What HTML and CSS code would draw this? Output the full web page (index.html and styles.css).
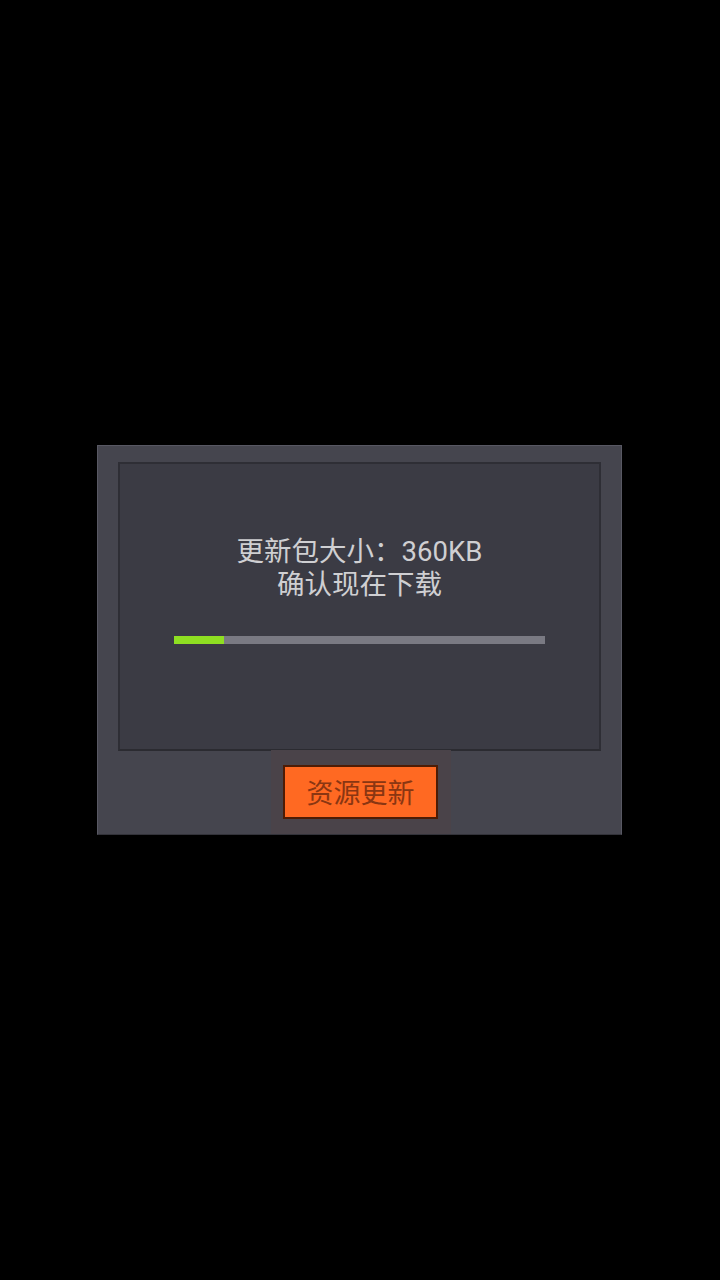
FILE: index.html
```html
<!DOCTYPE html>
<html lang="zh">
<head>
<meta charset="utf-8">
<link rel="stylesheet" href="styles.css">
</head>
<body>
<div class="screen">
  <div class="dialog">
    <div class="inner">
      <div class="message">
        <div class="line">更新包大小：360KB</div>
        <div class="line">确认现在下载</div>
      </div>
      <div class="progress"><div class="fill" style="width:50px"></div></div>
    </div>
    <div class="actions">
      <div class="halo">
        <div class="btn">资源更新</div>
      </div>
    </div>
  </div>
</div>
</body>
</html>
```
FILE: styles.css
```css
html, body {
  margin: 0;
  padding: 0;
  background: #000;
}
.screen {
  width: 720px;
  height: 1280px;
  display: flex;
  align-items: center;
  justify-content: center;
  font-family: Roboto, "Noto Sans CJK SC", sans-serif;
}
.dialog {
  box-sizing: border-box;
  width: 525px;
  height: 390px;
  margin-left: -1px;
  margin-top: -1px;
  background: #45454e;
  border: 1px solid #585863;
  border-bottom-color: #33333a;
  display: flex;
  flex-direction: column;
  align-items: center;
  padding-top: 16px;
}
.inner {
  box-sizing: border-box;
  width: 483px;
  height: 289px;
  background: #3b3b44;
  border: 2px solid #2e2e35;
  border-bottom-color: #2b2b31;
  display: flex;
  flex-direction: column;
  align-items: center;
  padding-top: 71px;
}
.message {
  color: #cfcfd2;
  font-size: 27.5px;
  line-height: 33px;
  text-align: center;
}
.progress {
  margin-top: 35px;
  width: 371px;
  height: 8px;
  background: #7a7a83;
  display: flex;
}
.fill {
  height: 100%;
  background: #8fdf22;
}
.actions {
  display: flex;
  justify-content: center;
  margin-top: -1px;
  margin-left: 2px;
}
.halo {
  width: 180px;
  height: 84px;
  background: #4a4349;
  display: flex;
  justify-content: center;
  padding-top: 15px;
  box-sizing: border-box;
}
.btn {
  box-sizing: border-box;
  width: 155px;
  height: 54px;
  background: #ff6922;
  border: 2px solid #4d1c05;
  color: #8a3612;
  font-size: 27px;
  display: flex;
  align-items: center;
  justify-content: center;
}
```
